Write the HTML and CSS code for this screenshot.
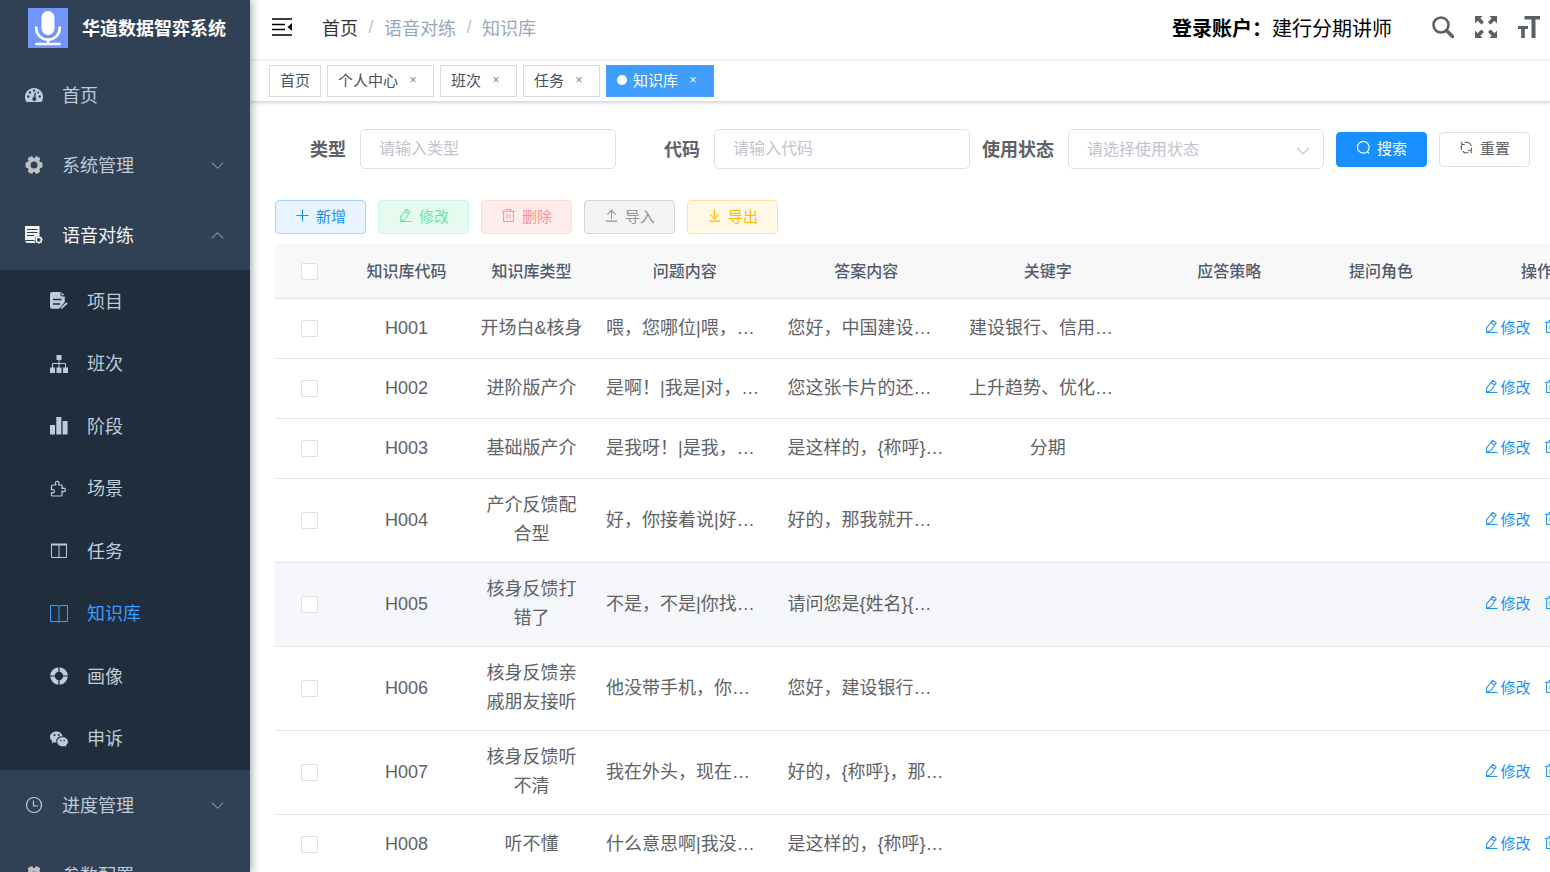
FILE: index.html
```
<!DOCTYPE html>
<html lang="zh-CN">
<head>
<meta charset="utf-8">
<title>华道数据智弈系统</title>
<link rel="stylesheet" href="styles.css">
</head>
<body>
<svg class="sprite" aria-hidden="true">
  <symbol id="i-down" viewBox="0 0 16 16"><path d="M2 5l6 6 6-6" fill="none" stroke="currentColor" stroke-width="1.200"/></symbol>
  <symbol id="i-up" viewBox="0 0 16 16"><path d="M2 11l6-6 6 6" fill="none" stroke="currentColor" stroke-width="1.200"/></symbol>
  <symbol id="i-edit" viewBox="0 0 16 16"><path d="M9.200 1.500l3.800 2.300-5.400 8.400-4.600 2-.3-4.600zM7.700 4l3.700 2.300M2 14.300h12.500" fill="none" stroke="currentColor" stroke-width="1.100"/></symbol>
  <symbol id="i-trash" viewBox="0 0 16 16"><path d="M1 3.500h14M5.500 3.500v-2h5v2M2.800 3.500v11h10.400v-11M6.500 6.500v5M9.500 6.500v5" fill="none" stroke="currentColor" stroke-width="1.100"/></symbol>
  <symbol id="i-plus" viewBox="0 0 16 16"><path d="M8 1.500v13M1.500 8h13" fill="none" stroke="currentColor" stroke-width="1.100"/></symbol>
  <symbol id="i-upload" viewBox="0 0 16 16"><path d="M8 12V2.500M3.500 7L8 2.500 12.500 7M2 14h12" fill="none" stroke="currentColor" stroke-width="1.100"/></symbol>
  <symbol id="i-download" viewBox="0 0 16 16"><path d="M8 2v9.500M3.500 7L8 11.500 12.500 7M2 14h12" fill="none" stroke="currentColor" stroke-width="1.100"/></symbol>
  <symbol id="i-search" viewBox="0 0 16 16"><path d="M12 12.300l2 2.200M7.800 1.500a6 6 0 1 1 0 12.500 6 6 0 1 1 0-12.500z" fill="none" stroke="currentColor" stroke-width="1.200"/></symbol>
  <symbol id="i-refresh" viewBox="0 0 16 16"><path d="M3 10.500A5.600 5.600 0 0 1 3.600 4.500M6 2.700a5.600 5.600 0 0 1 7.200 3.600M13.500 8a5.600 5.600 0 0 1-1.200 3.700M10 13.400A5.600 5.600 0 0 1 4 12M3 1.800v3h3.200M13 14.200v-3h-3.200" fill="none" stroke="currentColor" stroke-width="1.200"/></symbol>
  <symbol id="i-gear" viewBox="0 0 18 18"><circle cx="9" cy="9" r="5.200" fill="none" stroke="currentColor" stroke-width="3.400"/><path d="M2.200 7.800v2.400M15.800 7.800v2.400M4.700 3.100l1.800-1M11.500 2.100l1.800 1M4.700 14.900l1.800 1M11.500 15.900l1.800-1" fill="none" stroke="currentColor" stroke-width="3.400" stroke-linecap="round"/></symbol>
</svg>
<div class="app">
  <aside class="sidebar">
    <a class="brand" href="#">
      <svg class="brand-logo" viewBox="0 0 40 40"><path fill="#7495fd" d="M0 0h40v40H0z"/><rect x="13.500" y="3" width="13" height="24" rx="6.500" fill="#fff"/><path d="M8.300 19.500v1a11.700 11.200 0 0 0 23.400 0v-1M20 31.500V36M8.500 36h23" fill="none" stroke="#fff" stroke-width="2.600" stroke-linecap="round"/></svg>
      <span>华道数据智弈系统</span>
    </a>
    <nav class="menu">
      <a class="item" href="#">
        <svg class="menu-icon" viewBox="0 0 18 18"><path fill="currentColor" d="M9 2a9 9 0 0 0-8 13.200l.8.800h14.400l.8-.8A9 9 0 0 0 9 2z"/><g fill="#304156"><circle cx="3.300" cy="10.500" r="1.200"/><circle cx="5" cy="6.500" r="1.200"/><circle cx="9" cy="4.600" r="1.200"/><circle cx="14.700" cy="10.500" r="1.200"/><circle cx="13.200" cy="6.500" r="1"/><path d="M9.800 6.500l1.200.2-.7 4.500a2 2 0 1 1-1.500-.2z"/></g></svg>
        <span>首页</span>
      </a>
      <a class="item" href="#">
        <svg class="menu-icon gear"><use href="#i-gear"/></svg><span>系统管理</span><svg class="arrow"><use href="#i-down"/></svg>
      </a>
      <a class="item open" href="#">
        <svg class="menu-icon" viewBox="0 0 18 18"><path fill="currentColor" d="M0 0h14.500v10.500a4 4 0 0 0-4 6.500H3a3 3 0 0 1-3-3z"/><path d="M2 3.500h10.500M2 6.500h10.500M2 9.500h7" stroke="#304156"/><path d="M0 14.500h9" stroke="#304156"/><circle cx="13.800" cy="13.800" r="2.600" fill="none" stroke="currentColor" stroke-width="1.500"/><path d="M13.800 9.800v1.500m0 5v1.500m-4-4h1.500m5 0h1.500m-6.800-2.800l1 1m3.600 3.600l1 1m0-5.600l-1 1m-3.600 3.600l-1 1" stroke="currentColor"/></svg>
        <span>语音对练</span><svg class="arrow"><use href="#i-up"/></svg>
      </a>
      <div class="submenu">
        <a class="item" href="#"><svg class="menu-icon" viewBox="0 0 18 18"><path fill="currentColor" d="M2 0h8.500v3.500l1.500 1h2.800v5.500L9 16.800H2a2 2 0 0 1-2-2V2a2 2 0 0 1 2-2z"/><path fill="currentColor" d="M11.500.300l3 3h-3z"/><path d="M3 7.500h8.500M3 12h7" stroke="#1f2d3d" stroke-width="1.500"/><path d="M11 16.300l6-5.300" stroke="currentColor" stroke-width="1.800"/></svg><span>项目</span></a>
        <a class="item" href="#"><svg class="menu-icon" viewBox="0 0 18 18"><path fill="currentColor" d="M6.500 0h5v5h-5zM0 12.500h5V18H0zM6.500 12.500h5V18h-5zM13 12.500h5V18h-5z"/><path d="M9 5v8M2.500 13V8.500h13V13" fill="none" stroke="currentColor"/></svg><span>班次</span></a>
        <a class="item" href="#"><svg class="menu-icon" viewBox="0 0 18 18"><path fill="currentColor" d="M0 8h5v9.500H0zM6.300 0h5v17.500h-5zM12.600 4h5v13.500h-5z"/></svg><span>阶段</span></a>
        <a class="item" href="#"><svg class="menu-icon" viewBox="0 0 18 18"><path d="M2.500 5h3.300l-.3-1.500a1.800 1.800 0 1 1 3.500 0L8.700 5h3.300v3.500l1.700-.3a1.700 1.700 0 1 1 0 3.400l-1.700-.3v3.900q0 .8-.8.800H2.300q-.8 0-.8-.8v-2.500l1.200.2a1.700 1.700 0 0 0 0-3.400l-1.200.3V5.800q0-.8 1-.8z" fill="none" stroke="currentColor" stroke-width="1.200"/></svg><span>场景</span></a>
        <a class="item" href="#"><svg class="menu-icon" viewBox="0 0 18 18"><path d="M1.500 2.500h15v13h-15zM9 2.500v13" fill="none" stroke="currentColor"/><path d="M1 2.500h16" stroke="currentColor" stroke-width="2"/></svg><span>任务</span></a>
        <a class="item current" href="#"><svg class="menu-icon" viewBox="0 0 18 18"><path d="M.5.500h6.500q2 0 2 1.500 0-1.500 2-1.500h6.500v16H11q-2 0-2 1 0-1-2-1H.5zM9 2v15" fill="none" stroke="currentColor"/></svg><span>知识库</span></a>
        <a class="item" href="#"><svg class="menu-icon" viewBox="0 0 18 18"><circle cx="9" cy="9" r="6.500" fill="none" stroke="currentColor" stroke-width="4.600"/><path d="M9 0v18M0 9h18" stroke="#1f2d3d" stroke-width="1.200"/></svg><span>画像</span></a>
        <a class="item" href="#"><svg class="menu-icon" viewBox="0 0 18 18"><path fill="currentColor" d="M6.500 1.500C2.900 1.500 0 3.900 0 7c0 1.700.9 3.200 2.300 4.200l-.7 2.300 2.500-1.300c.7.200 1.500.3 2.300.3a5 5 0 0 1 6.400-6C12.200 3.600 9.600 1.500 6.500 1.500z"/><path fill="currentColor" d="M12.500 7.300c-3 0-5.300 2-5.300 4.500s2.400 4.500 5.300 4.500c.7 0 1.300-.1 1.900-.3l2 1.100-.5-1.800c1.300-.8 2.100-2.100 2.100-3.500 0-2.500-2.500-4.500-5.500-4.500z"/><g fill="#1f2d3d"><circle cx="4.500" cy="5" r="1"/><circle cx="8.700" cy="5" r="1"/><circle cx="10.800" cy="10.500" r=".8"/><circle cx="14.200" cy="10.500" r=".8"/></g></svg><span>申诉</span></a>
      </div>
      <a class="item" href="#"><svg class="menu-icon" viewBox="0 0 18 18"><path d="M9 1.500a7.500 7.500 0 1 1 0 15 7.500 7.500 0 0 1 0-15zM8.500 4.500v5.500h4.500" fill="none" stroke="currentColor" stroke-width="1.200"/></svg><span>进度管理</span><svg class="arrow"><use href="#i-down"/></svg></a>
      <a class="item" href="#"><svg class="menu-icon gear"><use href="#i-gear"/></svg><span>参数配置</span><svg class="arrow"><use href="#i-down"/></svg></a>
    </nav>
  </aside>

  <div class="main">
    <header class="navbar">
      <button class="icon-btn fold" type="button" aria-label="收起菜单"><svg viewBox="0 0 20 18"><path d="M0 1h20M0 6.500h13M0 11.500h13M0 17h20" stroke="#000" stroke-width="1.700"/><path d="M20 5v8l-4.500-4z"/></svg></button>
      <nav class="crumbs"><a href="#">首页</a><i>/</i><span>语音对练</span><i>/</i><span>知识库</span></nav>
      <p class="account"><b>登录账户：</b>建行分期讲师</p>
      <div class="tools">
        <button class="icon-btn" type="button" aria-label="搜索"><svg viewBox="0 0 22 22"><circle cx="9" cy="9" r="7.500" fill="none" stroke="currentColor" stroke-width="2.600"/><path d="M14.500 14.500l6 6" stroke="currentColor" stroke-width="3.400" stroke-linecap="round"/></svg></button>
        <button class="icon-btn" type="button" aria-label="全屏"><svg viewBox="0 0 22 22"><path fill="currentColor" d="M0 0h7.500L5.300 2.200 9 6 6.500 8.500 2.500 4.800 0 7.500zM22 0v7.500l-2.500-2.700-4 3.700L13 6l3.700-3.800L14.500 0zM0 22v-7.500l2.500 2.700 4-3.700L9 16l-3.700 3.800L7.500 22zM22 22h-7.500l2.200-2.200L13 16l2.500-2.500 4 3.700 2.500-2.700z"/></svg></button>
        <button class="icon-btn" type="button" aria-label="字号"><svg viewBox="0 0 22 22"><path fill="currentColor" d="M6.500 0H22v3.500h-4.500V22h-4V3.500h-7zM0 10h10v3H6.800v9H3.200v-9H0z"/></svg></button>
      </div>
    </header>
    <nav class="tags">
      <a class="tag" href="#">首页</a>
      <a class="tag" href="#">个人中心<span class="close">×</span></a>
      <a class="tag" href="#">班次<span class="close">×</span></a>
      <a class="tag" href="#">任务<span class="close">×</span></a>
      <a class="tag on" href="#">知识库<span class="close">×</span></a>
    </nav>

    <main class="content">
      <form class="filters">
        <div class="field"><label for="f-type">类型</label><input id="f-type" type="text" placeholder="请输入类型"></div>
        <div class="field"><label for="f-code">代码</label><input id="f-code" type="text" placeholder="请输入代码"></div>
        <div class="field"><label for="f-state">使用状态</label><div class="select"><select id="f-state"><option>请选择使用状态</option></select><svg><use href="#i-down"/></svg></div></div>
        <div class="actions">
          <button class="btn solid" type="button"><svg><use href="#i-search"/></svg>搜索</button>
          <button class="btn" type="button"><svg><use href="#i-refresh"/></svg>重置</button>
        </div>
      </form>
      <div class="toolbar">
        <button class="btn add" type="button"><svg><use href="#i-plus"/></svg>新增</button>
        <button class="btn edit" type="button" disabled><svg><use href="#i-edit"/></svg>修改</button>
        <button class="btn del" type="button" disabled><svg><use href="#i-trash"/></svg>删除</button>
        <button class="btn import" type="button"><svg><use href="#i-upload"/></svg>导入</button>
        <button class="btn export" type="button"><svg><use href="#i-download"/></svg>导出</button>
      </div>
      <div class="table-wrap">
        <table>
          <colgroup><col class="c-check"><col class="c-mid"><col class="c-mid"><col><col><col><col><col class="c-role"><col class="c-ops"></colgroup>
          <thead><tr><th><input type="checkbox" aria-label="全选"></th><th>知识库代码</th><th>知识库类型</th><th>问题内容</th><th>答案内容</th><th>关键字</th><th>应答策略</th><th>提问角色</th><th>操作</th></tr></thead>
          <tbody>
            <tr><td><input type="checkbox" aria-label="H001"></td><td>H001</td><td class="kind">开场白&amp;核身</td><td class="clip">喂，您哪位|喂，…</td><td class="clip">您好，中国建设…</td><td class="clip">建设银行、信用…</td><td></td><td></td><td class="ops"><button type="button"><svg><use href="#i-edit"/></svg>修改</button><button type="button"><svg><use href="#i-trash"/></svg>删除</button></td></tr>
            <tr><td><input type="checkbox" aria-label="H002"></td><td>H002</td><td class="kind">进阶版产介</td><td class="clip">是啊！|我是|对，…</td><td class="clip">您这张卡片的还…</td><td class="clip">上升趋势、优化…</td><td></td><td></td><td class="ops"><button type="button"><svg><use href="#i-edit"/></svg>修改</button><button type="button"><svg><use href="#i-trash"/></svg>删除</button></td></tr>
            <tr><td><input type="checkbox" aria-label="H003"></td><td>H003</td><td class="kind">基础版产介</td><td class="clip">是我呀！|是我，…</td><td class="clip">是这样的，{称呼}…</td><td>分期</td><td></td><td></td><td class="ops"><button type="button"><svg><use href="#i-edit"/></svg>修改</button><button type="button"><svg><use href="#i-trash"/></svg>删除</button></td></tr>
            <tr><td><input type="checkbox" aria-label="H004"></td><td>H004</td><td class="kind">产介反馈配合型</td><td class="clip">好，你接着说|好…</td><td class="clip">好的，那我就开…</td><td></td><td></td><td></td><td class="ops"><button type="button"><svg><use href="#i-edit"/></svg>修改</button><button type="button"><svg><use href="#i-trash"/></svg>删除</button></td></tr>
            <tr class="hover"><td><input type="checkbox" aria-label="H005"></td><td>H005</td><td class="kind">核身反馈打错了</td><td class="clip">不是，不是|你找…</td><td class="clip">请问您是{姓名}{…</td><td></td><td></td><td></td><td class="ops"><button type="button"><svg><use href="#i-edit"/></svg>修改</button><button type="button"><svg><use href="#i-trash"/></svg>删除</button></td></tr>
            <tr><td><input type="checkbox" aria-label="H006"></td><td>H006</td><td class="kind">核身反馈亲戚朋友接听</td><td class="clip">他没带手机，你…</td><td class="clip">您好，建设银行…</td><td></td><td></td><td></td><td class="ops"><button type="button"><svg><use href="#i-edit"/></svg>修改</button><button type="button"><svg><use href="#i-trash"/></svg>删除</button></td></tr>
            <tr><td><input type="checkbox" aria-label="H007"></td><td>H007</td><td class="kind">核身反馈听不清</td><td class="clip">我在外头，现在…</td><td class="clip">好的，{称呼}，那…</td><td></td><td></td><td></td><td class="ops"><button type="button"><svg><use href="#i-edit"/></svg>修改</button><button type="button"><svg><use href="#i-trash"/></svg>删除</button></td></tr>
            <tr><td><input type="checkbox" aria-label="H008"></td><td>H008</td><td class="kind">听不懂</td><td class="clip">什么意思啊|我没…</td><td class="clip">是这样的，{称呼}…</td><td></td><td></td><td></td><td class="ops"><button type="button"><svg><use href="#i-edit"/></svg>修改</button><button type="button"><svg><use href="#i-trash"/></svg>删除</button></td></tr>
          </tbody>
        </table>
      </div>
    </main>
  </div>
</div>
</body>
</html>
```

FILE: styles.css
```
* { box-sizing: border-box; }
body {
  margin: 0;
  font-family: "Liberation Sans", "Noto Sans CJK SC", sans-serif;
  font-size: 18px;
  color: #606266;
  background: #fff;
}
a { color: inherit; text-decoration: none; }
button, input, select { font-family: inherit; margin: 0; }
button { cursor: pointer; }
.sprite { display: none; }
.app { display: flex; height: 100vh; overflow: hidden; }

/* sidebar */
.sidebar {
  flex: 0 0 250px;
  overflow: hidden;
  background: #304156;
  color: #bfcbd9;
  box-shadow: 2px 0 8px rgba(0, 21, 41, .35);
  z-index: 2;
}
.brand {
  display: flex;
  align-items: center;
  gap: 14px;
  height: 60px;
  padding: 8px 0 12px 28px;
  color: #fff;
  font-weight: 700;
  white-space: nowrap;
}
.brand span { padding-bottom: 3px; }
.brand-logo { width: 40px; height: 40px; }
.item {
  display: flex;
  align-items: center;
  height: 70px;
  padding: 0 25px;
}
.item span { flex: 1; padding-bottom: 3px; }
.menu-icon { width: 18px; height: 18px; margin-right: 19px; }
.gear { color: #c0c0c0; }
.arrow { width: 15px; height: 15px; color: #909399; }
.open { color: #f4f4f5; }
.submenu {
  display: grid;
  grid-auto-rows: 1fr;
  height: 500px;
  background: #1f2d3d;
}
.submenu .item { height: auto; padding-left: 50px; }
.current { color: #409eff; }

/* top bar */
.main { flex: 1; min-width: 0; display: flex; flex-direction: column; }
.navbar {
  display: flex;
  align-items: center;
  flex: 0 0 60px;
  padding: 0 10px 6px 22px;
}
.icon-btn { display: block; padding: 0; border: 0; background: none; color: #5a5e66; }
.icon-btn svg { display: block; width: 22px; height: 22px; }
.fold svg { width: 20px; height: 18px; }
.crumbs { display: flex; align-items: center; margin-left: 30px; color: #97a8be; }
.crumbs a { color: #303133; }
.crumbs i { width: 26px; text-align: center; font-style: normal; color: #c0c4cc; }
.account { margin: 0 40px 0 auto; font-size: 20px; color: #000; }
.tools { display: flex; gap: 21px; }

/* open page tabs */
.tags {
  display: flex;
  align-items: center;
  gap: 6px;
  flex: 0 0 42px;
  padding: 0 19px 1px;
  background: #fff;
  border-top: 1px solid #f0f1f2;
  border-bottom: 1px solid #d8dce5;
  box-shadow: 0 1px 4px rgba(0, 0, 0, .16);
}
.tag {
  display: flex;
  align-items: center;
  height: 32px;
  padding: 0 10px 2px;
  border: 1px solid #d8dce5;
  font-size: 15px;
  color: #495060;
}
.close { width: 20px; margin-left: 5px; text-align: center; font-size: 12px; color: #808695; }
.on { background: #409eff; border-color: #409eff; color: #fff; }
.on .close { color: #fff; }
.on::before { content: ""; width: 10px; height: 10px; margin-right: 6px; border-radius: 50%; background: #fff; }

/* search form */
.content { flex: 1; min-height: 0; padding: 27px 0 0 25px; overflow: hidden; }
.filters { display: flex; flex-wrap: wrap; align-items: center; gap: 12px; }
.field { display: flex; align-items: center; }
.field label { width: 86px; padding: 0 14px 3px 0; text-align: right; font-weight: 700; white-space: nowrap; }
.field:first-child label { width: 85px; }
.field input, .field select {
  width: 256px;
  height: 40px;
  padding: 0 18px;
  border: 1px solid #dcdfe6;
  border-radius: 5px;
  background: #fff;
  font-size: 16px;
  color: #c0c4cc;
}
.field ::placeholder { color: #c0c4cc; }
.select { position: relative; }
.field select { display: block; appearance: none; }
.select svg { position: absolute; right: 13px; top: 14px; width: 16px; height: 16px; color: #c0c4cc; pointer-events: none; }
.actions, .toolbar { display: flex; gap: 12px; }
.btn {
  display: flex;
  align-items: center;
  gap: 6px;
  height: 35px;
  padding: 0 19px 3px;
  border: 1px solid #dcdfe6;
  border-radius: 4px;
  background: #fff;
  font-size: 15px;
  color: #606266;
}
.btn svg { width: 15px; height: 15px; }
.solid { background: #1890ff; border-color: #1890ff; color: #fff; }
.toolbar { padding: 31px 0 10px; }
.toolbar .btn { height: 34px; }
.toolbar .add { background: #e8f4ff; border-color: #a3d3ff; color: #1890ff; }
.toolbar .edit { background: #e7faf0; border-color: #d0f5e0; color: #71e2a3; }
.toolbar .del { background: #ffeded; border-color: #ffdbdb; color: #ff9292; }
.toolbar .import { background: #f4f4f5; border-color: #d3d4d6; color: #909399; }
.toolbar .export { background: #fff8e6; border-color: #ffe399; color: #ffba00; }

/* data table */
.table-wrap { overflow: hidden; }
table { width: 100%; min-width: 1357px; table-layout: fixed; border-collapse: separate; border-spacing: 0; }
.c-check { width: 69px; }
.c-mid { width: 125px; }
.c-role { width: 122px; }
.c-ops { width: 190px; }
th, td { padding: 12px; border-bottom: 1px solid #dfe6ec; text-align: center; line-height: 29px; }
th { height: 55px; background: #f8f8f9; color: #515a6e; font-size: 16px; font-weight: 500; }
td { height: 60px; }
.kind { padding: 12px 10px 13px; }
.clip { text-align: left; white-space: nowrap; }
.hover td { background: #f5f7fa; }
td input, th input {
  display: block;
  appearance: none;
  width: 17px;
  height: 17px;
  margin: 0 auto;
  border: 1px solid #dcdfe6;
  border-radius: 2px;
  background: #fff;
}
.ops { padding-block: 0; white-space: nowrap; }
.ops button {
  display: inline-flex;
  align-items: center;
  gap: 1px;
  padding: 0;
  border: 0;
  background: none;
  font-size: 15px;
  color: #1890ff;
}
.ops button + button { margin-left: 13px; }
.ops svg { width: 15px; height: 15px; }
```
